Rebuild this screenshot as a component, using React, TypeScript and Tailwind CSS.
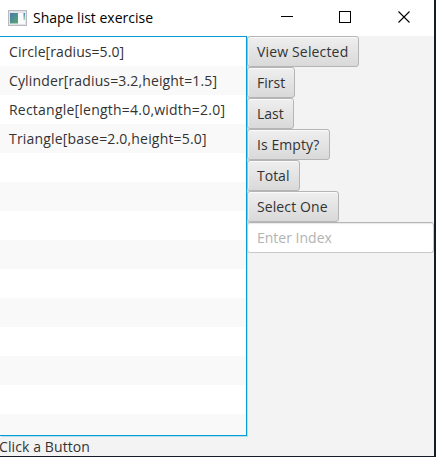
const shapes = [
  { text: 'Circle[radius=5.0]', tracking: 'tracking-[0.07px]' },
  { text: 'Cylinder[radius=3.2,height=1.5]', tracking: 'tracking-[0.14px]' },
  { text: 'Rectangle[length=4.0,width=2.0]', tracking: 'tracking-[0.22px]' },
  { text: 'Triangle[base=2.0,height=5.0]', tracking: 'tracking-[0.18px]' },
];

const rows = Array.from({ length: 14 }, (_, i) => shapes[i]);

const buttons = [
  { label: 'View Selected', size: 'w-28 tracking-[0.16px]' },
  { label: 'First', size: 'w-12' },
  { label: 'Last', size: 'w-[47px]' },
  { label: 'Is Empty?', size: 'w-[83px] tracking-[0.08px]' },
  { label: 'Total', size: 'w-[53px]' },
  { label: 'Select One', size: 'w-[92px] tracking-[0.1px]' },
];

function AppIcon() {
  return (
    <svg width="19" height="16" viewBox="0 0 19 16">
      <defs>
        <linearGradient id="pane" x1="0" y1="0" x2="1" y2="1">
          <stop offset="0" stopColor="#4a78b0" />
          <stop offset="1" stopColor="#55ab68" />
        </linearGradient>
        <linearGradient id="bar" x1="0" y1="0" x2="0" y2="1">
          <stop offset="0" stopColor="#4a80bd" />
          <stop offset="1" stopColor="#a5dcb8" />
        </linearGradient>
      </defs>
      <rect x="0.5" y="0.5" width="18" height="15" fill="#e4e4e8" stroke="#b9babf" />
      <rect x="2" y="3" width="15" height="11" fill="#fafafc" />
      <rect x="2" y="3" width="8" height="10.500" fill="url(#pane)" />
      <rect x="15.500" y="3" width="1.500" height="7" fill="url(#bar)" />
    </svg>
  );
}

function TitleBar() {
  return (
    <header className="flex h-9 shrink-0 items-center bg-white pl-2">
      <AppIcon />
      <h1 className="ml-1.5 flex-1 whitespace-nowrap text-[14px] leading-5 text-black">Shape list exercise</h1>
      <svg className="shrink-0" width="160" height="36" viewBox="0 0 160 36" fill="none" stroke="#000">
        <path d="M7 16.5h12M65.500 11.500h11v11h-11z" shapeRendering="crispEdges" />
        <path d="M124.500 11.500l11 11M135.500 11.500l-11 11" strokeWidth="1.1" />
      </svg>
    </header>
  );
}

export default function App() {
  return (
    <div className="flex h-[457px] w-[436px] flex-col overflow-hidden border-r-2 border-b border-[#161b28] bg-[#f3f3f3] font-['Open_Sans','Noto_Sans',sans-serif] text-[14px] text-[#333]">
      <TitleBar />
      <main className="flex h-[400px] shrink-0">
        <ul className="w-[247px] overflow-hidden border-t border-r border-b border-[#039ed3] shadow-[1px_1px_0_#b9dfec]">
          {rows.map((row, i) => (
            <li key={i} className="h-[29px] whitespace-nowrap bg-white pl-[9px] leading-[29px] even:bg-[#f9f9f9]">
              {row && <span className={row.tracking}>{row.text}</span>}
            </li>
          ))}
        </ul>
        <section className="z-10 flex flex-1 flex-col items-start">
          {buttons.map((b) => (
            <button
              key={b.label}
              className={`h-[31px] whitespace-nowrap rounded-[3px] border border-[#b5b5b5] bg-linear-to-b from-[#efefef] to-[#d9d9d9] pl-[9px] text-left shadow-[inset_0_1px_0_#fafafa,inset_1px_0_0_#eee] ${b.size}`}
            >
              {b.label}
            </button>
          ))}
          <input
            className="h-[31px] w-full rounded-[3px] border border-[#c8c8c8] border-t-[#b5b5b5] bg-white pl-[9px] shadow-[inset_0_1px_1px_#e8e8e8] outline-none placeholder:text-[#b3b3b3]"
            placeholder="Enter Index"
          />
        </section>
      </main>
      <footer className="-ml-px whitespace-nowrap leading-[21px] tracking-[0.1px]">Click a Button</footer>
    </div>
  );
}
